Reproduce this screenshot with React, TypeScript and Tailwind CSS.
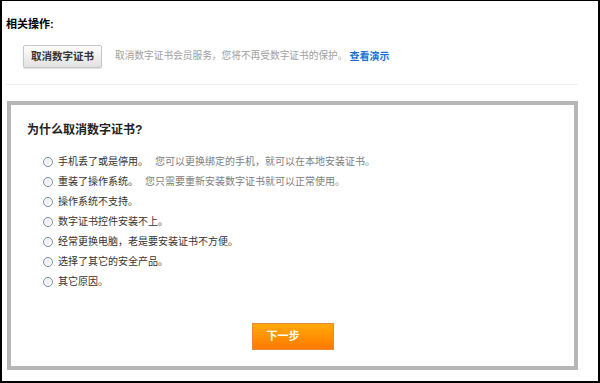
import React from "react";

const items: { label: string; hint?: string }[] = [
  { label: "手机丢了或是停用。", hint: "您可以更换绑定的手机，就可以在本地安装证书。" },
  { label: "重装了操作系统。", hint: "您只需要重新安装数字证书就可以正常使用。" },
  { label: "操作系统不支持。" },
  { label: "数字证书控件安装不上。" },
  { label: "经常更换电脑，老是要安装证书不方便。" },
  { label: "选择了其它的安全产品。" },
  { label: "其它原因。" },
];

export default function App() {
  return (
    <div
      className="w-[600px] h-[383px] bg-white border-black border-t-[1px] border-l-[2px] border-r-[2px] border-b-[2px] flex flex-col overflow-hidden"
      style={{ fontFamily: '"Liberation Sans", "Noto Sans CJK SC", sans-serif' }}
    >
      <div className="pl-[4px] pt-[16px] text-[11px] leading-[14px] font-bold text-black">相关操作:</div>
      <div className="flex items-center pl-[21px] mt-[14px]">
        <button className="h-[23px] px-[7px] rounded-[2px] border border-[#c6c6c6] bg-gradient-to-b from-[#fdfdfd] to-[#e2e2e2] text-[10.5px] font-bold text-[#333] shadow-[0_1px_1px_rgba(0,0,0,0.12)]">
          取消数字证书
        </button>
        <span className="ml-[13px] text-[9.7px] text-[#a0a0a0]">取消数字证书会员服务，您将不再受数字证书的保护。</span>
        <a className="ml-[2px] text-[10px] font-bold text-[#1b70d6]">查看演示</a>
      </div>
      <div className="ml-[4px] w-[572px] h-px bg-[#efefef] mt-[16px]" />
      <div className="ml-[5px] mt-[16px] w-[571px] h-[269px] border-[4px] border-[#b6b6b6] flex flex-col">
        <div className="pl-[16px] pt-[17px] text-[12px] leading-[16px] font-bold text-[#222]">为什么取消数字证书?</div>
        <div className="flex flex-col mt-[13.5px] pl-[32px]">
          {items.map((it, i) => (
            <div key={i} className="h-[20px] flex items-center text-[10px]">
              <span className="w-[10px] h-[10px] rounded-full border border-[#7d8fa6] bg-gradient-to-br from-[#f0f0f0] to-white shrink-0" />
              <span className="ml-[5px] text-[#333]">{it.label}</span>
              {it.hint && <span className="ml-[7px] text-[#808080]">{it.hint}</span>}
            </div>
          ))}
        </div>
        <div className="flex justify-center mt-[31.5px]">
          <button className="w-[82px] h-[27px] border border-[#e58a37] bg-gradient-to-b from-[#ffa90a] to-[#ff7800] text-white text-[11px] font-bold text-left pl-[14px]">
            下一步
          </button>
        </div>
      </div>
    </div>
  );
}
